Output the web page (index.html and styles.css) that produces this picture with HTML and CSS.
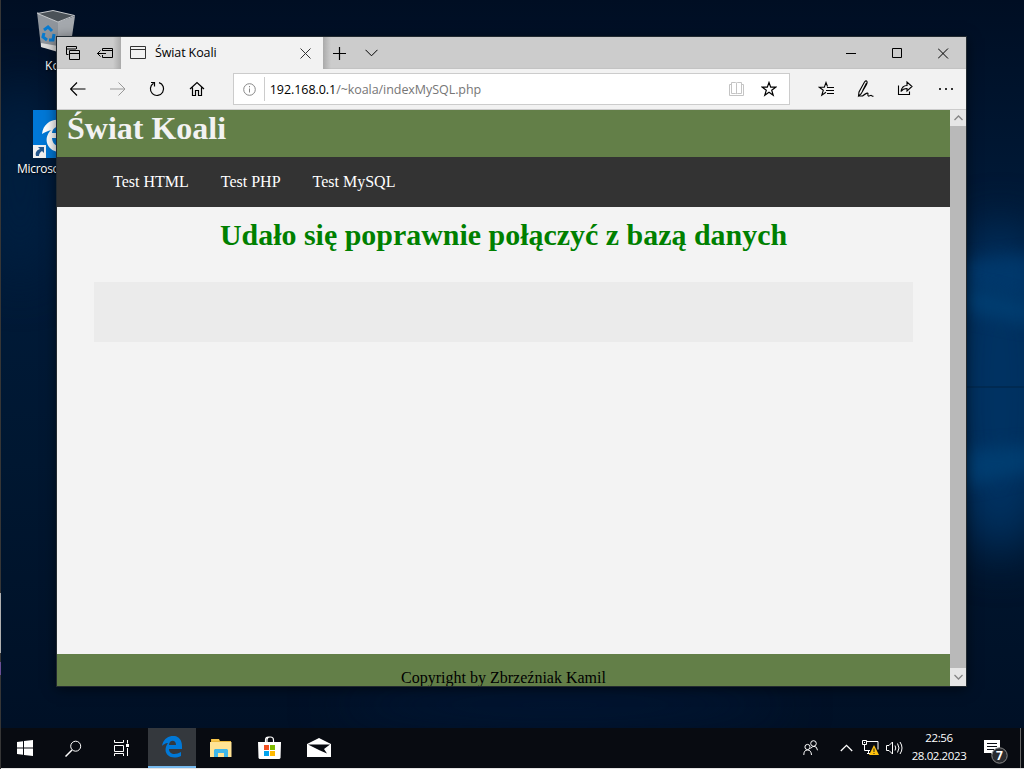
FILE: index.html
```html
<!DOCTYPE html>
<html lang="pl">
<head>
<meta charset="utf-8">
<title>Świat Koali</title>
<link rel="stylesheet" href="styles.css">
</head>
<body>
<div class="desktop">
  <svg class="wallpaper" width="1024" height="769" viewBox="0 0 1024 769">
    <defs>
      <filter id="soft" x="-150%" y="-150%" width="400%" height="400%" color-interpolation-filters="sRGB"><feGaussianBlur stdDeviation="24"/></filter>
      <filter id="soft2" x="-50%" y="-50%" width="200%" height="200%" color-interpolation-filters="sRGB"><feGaussianBlur stdDeviation="8"/></filter>
      <linearGradient id="sky" x1="0" y1="0" x2="0" y2="1">
        <stop offset="0" stop-color="#000e23"/><stop offset=".3" stop-color="#001b3a"/>
        <stop offset=".6" stop-color="#001731"/><stop offset="1" stop-color="#000f24"/>
      </linearGradient>
    </defs>
    <rect width="1024" height="769" fill="url(#sky)"/>
    <ellipse cx="1000" cy="390" rx="60" ry="165" fill="#003262" filter="url(#soft)"/>
    <path d="M966 286L1030 302V255L966 262z" fill="#00386b" filter="url(#soft2)"/>
    <path d="M966 286L1030 302V325L966 312z" fill="#003d70" filter="url(#soft2)"/>
    <path d="M966 486L1030 472V445L966 450z" fill="#003d70" filter="url(#soft2)"/>
    <path d="M966 387h58" stroke="#002a52" stroke-width="2"/>
    <ellipse cx="20" cy="180" rx="35" ry="100" fill="#001f40" filter="url(#soft)"/>
    <ellipse cx="560" cy="705" rx="230" ry="12" fill="#00193c" filter="url(#soft)"/>
  </svg>
  <div class="edge-strip"><i class="strip-gray"></i><i class="strip-purple"></i></div>

  <div class="shortcut bin">
    <svg width="40" height="44" viewBox="0 0 40 44">
      <path d="M0 2L21 12V40L4 37z" fill="#8f959c"/><path d="M21 12L38 6L33 40H21z" fill="#a5a9ae"/>
      <path d="M4 33l17 3v6L4 37z" fill="#dedede"/>
      <path d="M.5 3.500L16 .5 37.500 5.500 21 12z" fill="#4b5258" stroke="#c7cacd"/>
      <g fill="none" stroke="#087bd0" stroke-width="3"><path d="M7 20l4-3 4 4M17 24l-1 6h-4M10 30l-4-3 1-4"/></g>
    </svg>
    <span>Kosz</span>
  </div>
  <div class="shortcut edge-link">
    <svg width="48" height="48" viewBox="0 0 48 48">
      <rect width="48" height="48" fill="#0078d7"/>
      <path d="M9 24C11 5 39 4 39 28H19c1 11 12 9 18 6v6c-19 8-30-9-19-20-4 1-7 3-9 4zM19 23h12c0-9-11-8-12 0z" fill="#fff"/>
      <rect x="0" y="35" width="13" height="13" fill="#f1f1f1"/>
      <path d="M3 46c-1-4 1-6 4-7l-2-2h6v6l-2-2c-2 1-3 3-3 5z" fill="#24578d"/>
    </svg>
    <span>Microsoft Edge</span>
  </div>

  <main class="window">
    <div class="tabbar">
      <div class="cell32"><svg width="16" height="16" viewBox="0 0 16 16"><path d="M3.500 9.500H1.500V1.500H11.500V4M1.500 4H11M4.500 5.500h10v9h-10zM4.500 8.500h10"/></svg></div>
      <div class="cell32 shaded"><svg width="16" height="16" viewBox="0 0 16 16"><path d="M5.500 6V3.500h10v9h-10V10M5.500 5.500h10M0 8.500h9M3.500 5.500L.5 8.500 3.500 11.500"/></svg></div>
      <div class="tab">
        <svg class="page-icon" width="16" height="14" viewBox="0 0 16 14"><path d="M.5.5h15v12H.5zM.5 3.500h15"/></svg>
        <span class="tab-title">Świat Koali</span>
        <svg class="close-tab" width="11" height="11" viewBox="0 0 11 11"><path d="M.5.5l10 10M10.500.5l-10 10"/></svg>
      </div>
      <div class="cell32 after-tab"><svg width="13" height="13" viewBox="0 0 13 13"><path stroke-width="1.200" d="M6.500 0v13M0 6.500h13"/></svg></div>
      <div class="cell32"><svg width="13" height="8" viewBox="0 0 13 8"><path d="M.5.8l6 6 6-6"/></svg></div>
      <div class="controls">
        <div><svg width="11" height="11" viewBox="0 0 11 11"><path d="M0 5.500h10"/></svg></div>
        <div><svg width="11" height="11" viewBox="0 0 11 11"><path d="M.5.5h9v9h-9z"/></svg></div>
        <div><svg width="11" height="11" viewBox="0 0 11 11"><path d="M0 .5l10 10M10 .5l-10 10"/></svg></div>
      </div>
    </div>

    <div class="toolbar">
      <div class="tool"><svg width="16" height="14" viewBox="0 0 16 14"><path stroke-width="1.200" d="M.5 7h15M7 .5L.5 7 7 13.500"/></svg></div>
      <div class="tool dim"><svg width="16" height="14" viewBox="0 0 16 14"><path d="M0 7h15M8.500.5L15 7l-6.500 6.500"/></svg></div>
      <div class="tool"><svg width="16" height="16" viewBox="0 0 16 16"><path stroke-width="1.200" d="M10 1.600A6.600 6.600 0 1 1 4.500 2.300M2 1.500h3.500v4"/></svg></div>
      <div class="tool"><svg width="16" height="16" viewBox="0 0 16 16"><path stroke-width="1.200" d="M1 8l7-6.500L15 8M3.500 6.500v8h3v-5h3v5h3v-8"/></svg></div>
      <div class="address">
        <svg class="info" width="13" height="13" viewBox="0 0 13 13"><circle cx="6.500" cy="6.500" r="5.800"/><path d="M6.500 5.500v4M6.500 3v1.300"/></svg>
        <span class="url"><b>192.168.0.1</b>/~koala/indexMySQL.php</span>
        <svg class="book" width="16" height="15" viewBox="0 0 16 15"><path d="M2.500.5h4q1 0 1 1v10.500q0-.5-1-.5h-4zM12.500.5h-4q-1 0-1 1v10.500q0-.5 1-.5h4zM2.500 2.500h-2v11h14v-11h-2"/></svg>
        <svg class="star" width="16" height="16" viewBox="0 0 16 16"><path stroke-width="1.200" d="M8 1.500l1.700 4.700h5L10.700 9.200l1.500 5L8 11.200l-4.200 3 1.500-5L1.300 6.200h5z"/></svg>
      </div>
      <div class="actions">
        <div class="tool"><svg width="17" height="16" viewBox="0 0 17 16"><path stroke-width="1.100" d="M9.500 5.500L8 1.500 6.300 6.200H1.300L5.300 9.200l-1.500 5L8 11.200M9 6.500h7M8 9.500h8M9 12.500h7"/></svg></div>
        <div class="tool"><svg width="17" height="18" viewBox="0 0 17 18"><path stroke-width="1.100" d="M1.500 16l.5-4L7.500 2q1.500-2 2.500-.5.500 1-.5 3L4 14zM5.500 11L9.500 3M1.500 16h4q5-4 5.500-2.500-.5 3 1 2.500l2-.7 1.500 1h1"/></svg></div>
        <div class="tool share"><svg width="17" height="16" viewBox="0 0 17 16"><path stroke-width="1.100" d="M1.500 5.500v9h11v-3M4 11.500q1-6 6-6v-3.500l5 4.500-5 4.500V8.500q-4 0-6 3z"/></svg></div>
        <div class="tool more"><svg width="15" height="3" viewBox="0 0 15 3"><path fill="#333" stroke="none" d="M0 0h2v2H0zM6 0h2v2H6zM12 0h2v2h-2z"/></svg></div>
      </div>
    </div>

    <div class="viewport">
      <div class="page">
        <header class="site-header"><h1>Świat Koali</h1></header>
        <nav class="site-nav"><a>Test HTML</a><a>Test PHP</a><a>Test MySQL</a></nav>
        <section class="content">
          <h2>Udało się poprawnie połączyć z bazą danych</h2>
          <div class="panel"></div>
        </section>
        <footer class="site-footer">Copyright by Zbrzeźniak Kamil</footer>
      </div>
      <div class="scrollbar">
        <div><svg width="9" height="6" viewBox="0 0 9 6"><path d="M.5 5l4-4 4 4"/></svg></div>
        <div class="down"><svg width="9" height="6" viewBox="0 0 9 6"><path d="M.5 1l4 4 4-4"/></svg></div>
      </div>
    </div>
  </main>

  <div class="taskbar">
    <div class="task"><svg width="16" height="16" viewBox="0 0 16 16"><path fill="#fff" d="M0 2l6-.8V7.500H0zM7 1l9-1v7.500H7zM0 8.500h6v6.300L0 14zM7 8.500h9V16l-9-1z"/></svg></div>
    <div class="task"><svg width="17" height="17" viewBox="0 0 17 17"><circle cx="10.700" cy="6.200" r="5"/><path stroke-width="1.500" d="M7 10l-6.500 6.500"/></svg></div>
    <div class="task view"><svg width="17" height="16" viewBox="0 0 17 16"><path d="M1.500 0v2.500h9V0M1.500 5.500h9v6h-9zM1.500 16v-2.500h9V16M14.500 0v3.500M14.500 8v8"/><path fill="#fff" stroke="none" d="M13 4h3v3h-3z"/></svg></div>
    <div class="task active"><svg width="20" height="22" viewBox="0 0 20 22"><path fill="#0078d7" fill-rule="evenodd" d="M0 10C2-3 20-4 20 10v3H7c0 6 7 6 12 3v4C8 25-1 17 6 7 3 7 1 9 0 10zM7 9h7c0-6-7-5-7 0z"/></svg></div>
    <div class="task"><svg width="22" height="19" viewBox="0 0 22 19"><path fill="#e9b73b" d="M1 0h8l1 2h11v4H1z"/><path fill="#ffe394" d="M0 3h21.500v15H0z"/><path fill="#f8c64b" d="M2 0h7v2H2z"/><path fill="#3fb7e9" d="M4 18v-7l1-1h12l1 1v7h-4v-4H8v4z"/></svg></div>
    <div class="task store"><svg width="23" height="23" viewBox="0 0 23 23"><path stroke-width="1.200" d="M7.500 7V4q0-3 3-3h2q3 0 3 3v3M9 6V4q0-3 3-3"/><path fill="#fff" stroke="none" d="M0 6h23l-.5 16-1 1H1.500l-1-1z"/><path fill="#f25022" stroke="none" d="M6 9h5v5H6z"/><path fill="#7fba00" stroke="none" d="M12 9h5v5h-5z"/><path fill="#00a4ef" stroke="none" d="M6 15h5v5H6z"/><path fill="#ffb900" stroke="none" d="M12 15h5v5h-5z"/></svg></div>
    <div class="task mail"><svg width="24" height="19" viewBox="0 0 24 19"><path fill="#fff" stroke="none" d="M0 6L12 0l12 6v13H0zM1 6.500l12 6 7 3-3-4.500 6-4.500z" fill-rule="evenodd"/></svg></div>

    <div class="tray">
      <svg class="people" width="16" height="16" viewBox="0 0 16 16"><circle cx="10.500" cy="3.500" r="2.800"/><circle cx="4.500" cy="7" r="2.600"/><path d="M.8 15q0-5 3.700-5t4 5M7.500 8.500q2-2.200 3.500-2.200 3 0 3.500 4"/></svg>
      <svg class="up" width="13" height="8" viewBox="0 0 13 8"><path stroke-width="1.300" d="M.8 7l5.700-5.700L12.200 7"/></svg>
      <svg class="network" width="17" height="16" viewBox="0 0 17 16"><path d="M5 1.500h11v8M2.500 5v5.500H8M5 13.500h3M6.500 10v3.500M.5.500h4v4h-4zM2 2.500h1"/><path fill="#ffc20e" stroke="none" d="M12 5l5 10H7z"/><path stroke="#222" d="M12 8.500v3.500M12 13v1"/></svg>
      <svg class="sound" width="17" height="14" viewBox="0 0 17 14"><path d="M.5 4.500H3l3.500-3.500v12L3 9.500H.5zM9 4.500q1.500 2.500 0 5M11.500 2.500q3 4.500 0 9M14 1q4 6 0 12"/></svg>
      <div class="clock"><span>22:56</span><span>28.02.2023</span></div>
      <div class="notice"><svg width="25" height="25" viewBox="0 0 25 25"><path fill="#fff" stroke="none" d="M0 0h16v13h-5v4l-4-4H0z"/><path stroke="#080b12" d="M3 3.500h10M3 6.500h10M3 9.500h7"/><circle cx="15.500" cy="15.500" r="7.700" fill="#292b2f" stroke="#888"/><text x="15.500" y="19.500">7</text></svg></div>
    </div>
  </div>
</div>
</body>
</html>
```

FILE: styles.css
```css
* { box-sizing: border-box; }
body { margin: 0; font-family: "Open Sans", "Noto Sans", sans-serif; }
svg { display: block; fill: none; stroke: #000; flex: none; }
.desktop { position: relative; width: 1024px; height: 769px; overflow: hidden; background: #001022; }
.wallpaper { position: absolute; inset: 0; stroke: none; }
.edge-strip { position: absolute; left: 0; top: 0; width: 1px; height: 769px; background: #363636; padding-top: 593px; }
.edge-strip i { display: block; width: 1px; }
.strip-gray { height: 60px; background: #b0b0b0; }
.strip-purple { height: 13px; margin-top: 9px; background: #6b4f96; }

.shortcut { position: absolute; display: flex; flex-direction: column; align-items: center; width: 76px; color: #fff; font-size: 12px; line-height: 16px; white-space: nowrap; text-shadow: 1px 1px 2px #000; }
.shortcut svg { stroke: none; }
.bin { left: 19px; top: 10px; }
.bin span { margin: 4px 0 0 2px; }
.edge-link { left: 17px; top: 110px; align-items: flex-start; }
.edge-link svg { margin-left: 16px; }
.edge-link span { margin-top: 3px; letter-spacing: -.3px; }

.window { position: absolute; left: 56px; top: 36px; width: 911px; height: 651px; border: 1px solid #222a30; background: #f2f2f2; box-shadow: 0 2px 12px #0008; display: flex; flex-direction: column; }
.tabbar { height: 32px; background: #ccc; display: flex; flex: none; box-shadow: inset 0 -1px 1px #c2c2c2; }
.cell32 { width: 32px; height: 32px; display: flex; align-items: center; justify-content: center; }
.shaded { background: linear-gradient(90deg, transparent 75%, #aaa); }
.after-tab { background: linear-gradient(270deg, transparent 75%, #aaa); }
.tab { width: 202px; height: 32px; background: #f2f2f2; display: flex; align-items: center; padding: 0 12px 0 9px; }
.tab svg { stroke: #333; }
.tab-title { margin-left: 9px; font-size: 12.500px; line-height: 16px; letter-spacing: -.12px; }
.close-tab { margin-left: auto; }
.controls { display: flex; margin-left: auto; }
.controls div { width: 46px; display: flex; align-items: center; padding-left: 18px; }

.toolbar { height: 41px; flex: none; display: flex; align-items: center; background: #f2f2f2; border-bottom: 1px solid #ccc; padding-left: 1px; }
.tool { width: 39.700px; height: 40px; display: flex; align-items: center; justify-content: center; }
.dim svg { stroke: #999; }
.address { width: 557px; height: 32px; margin-left: 16px; background: #fff; border: 1px solid #ccc; display: flex; align-items: center; padding: 0 12px 0 9px; }
.info { stroke: #888; }
.url { margin-left: 8px; border-left: 1px solid #ccc; padding-left: 5px; height: 24px; line-height: 25px; font-size: 12.500px; letter-spacing: -.06px; color: #767676; white-space: nowrap; }
.url b { font-weight: 400; color: #000; }
.book { stroke: #c4c4c4; margin-left: auto; }
.star { margin-left: 16px; }
.actions { display: flex; margin-left: auto; padding-right: 1px; }
.share svg { margin-bottom: 2px; }
.more { padding-left: 2px; }

.viewport { flex: 1; display: flex; min-height: 0; }
.page { width: 893px; display: flex; flex-direction: column; overflow: hidden; font-family: "Liberation Serif", serif; }
.site-header { height: 47px; background: #637f48; padding-left: 10px; }
.site-header h1 { margin: 0; font-size: 32px; line-height: 37px; color: #f2f2f2; }
.site-nav { height: 50px; background: #333; display: flex; padding-left: 40px; }
.site-nav a { color: #fff; font-size: 16px; line-height: 50px; padding: 0 16px; }
.content { flex: 1; background: #f3f3f3; }
.content h2 { margin: 0; padding-top: 10px; height: 75px; color: #008000; font-size: 29.950px; line-height: 36px; text-align: center; white-space: nowrap; }
.panel { width: 819px; height: 60px; margin: 0 37px; background: #ebebeb; }
.site-footer { height: 32px; background: #637f48; text-align: center; font-size: 16px; line-height: 18px; padding-top: 15px; }
.scrollbar { width: 16px; background: #b9b9b9; display: flex; flex-direction: column; justify-content: space-between; }
.scrollbar div { height: 16px; background: #e6e6e6; display: grid; place-items: center; }
.scrollbar .down { height: 18px; }
.scrollbar svg { stroke: #858585; stroke-width: 1.300; }

.taskbar { position: absolute; left: 1px; top: 728px; width: 1023px; height: 41px; background: #080b11; border-bottom: 1px solid #e5e5e5; display: flex; }
.taskbar svg { stroke: #fff; }
.task { width: 49px; height: 40px; display: grid; place-items: center; }
.task:nth-child(-n+2) { width: 48px; }
.task.view { width: 51px; padding-right: 3px; }
.task.active { width: 48px; background: #34383d; border-bottom: 2px solid #76b9ed; }
.task.store { padding-bottom: 1px; }
.task.mail { padding-bottom: 2px; }
.task:first-child svg, .active svg, .task:nth-child(5) svg { stroke: none; }
.tray { margin-left: auto; width: 221px; display: flex; align-items: center; }
.up { margin-left: 21px; }
.network { margin-left: 9px; }
.sound { margin-left: 7px; }
.clock { display: flex; flex-direction: column; width: 56px; margin-left: 8px; align-items: center; color: #fff; font-size: 11.500px; line-height: 18px; height: 38px; letter-spacing: -.4px; white-space: nowrap; }
.notice { margin-left: 17px; border-right: 1px solid #666; height: 40px; padding-top: 12px; width: 37px; }
.notice text { font: 700 12px "Open Sans", sans-serif; fill: #fff; stroke: none; text-anchor: middle; }
```
